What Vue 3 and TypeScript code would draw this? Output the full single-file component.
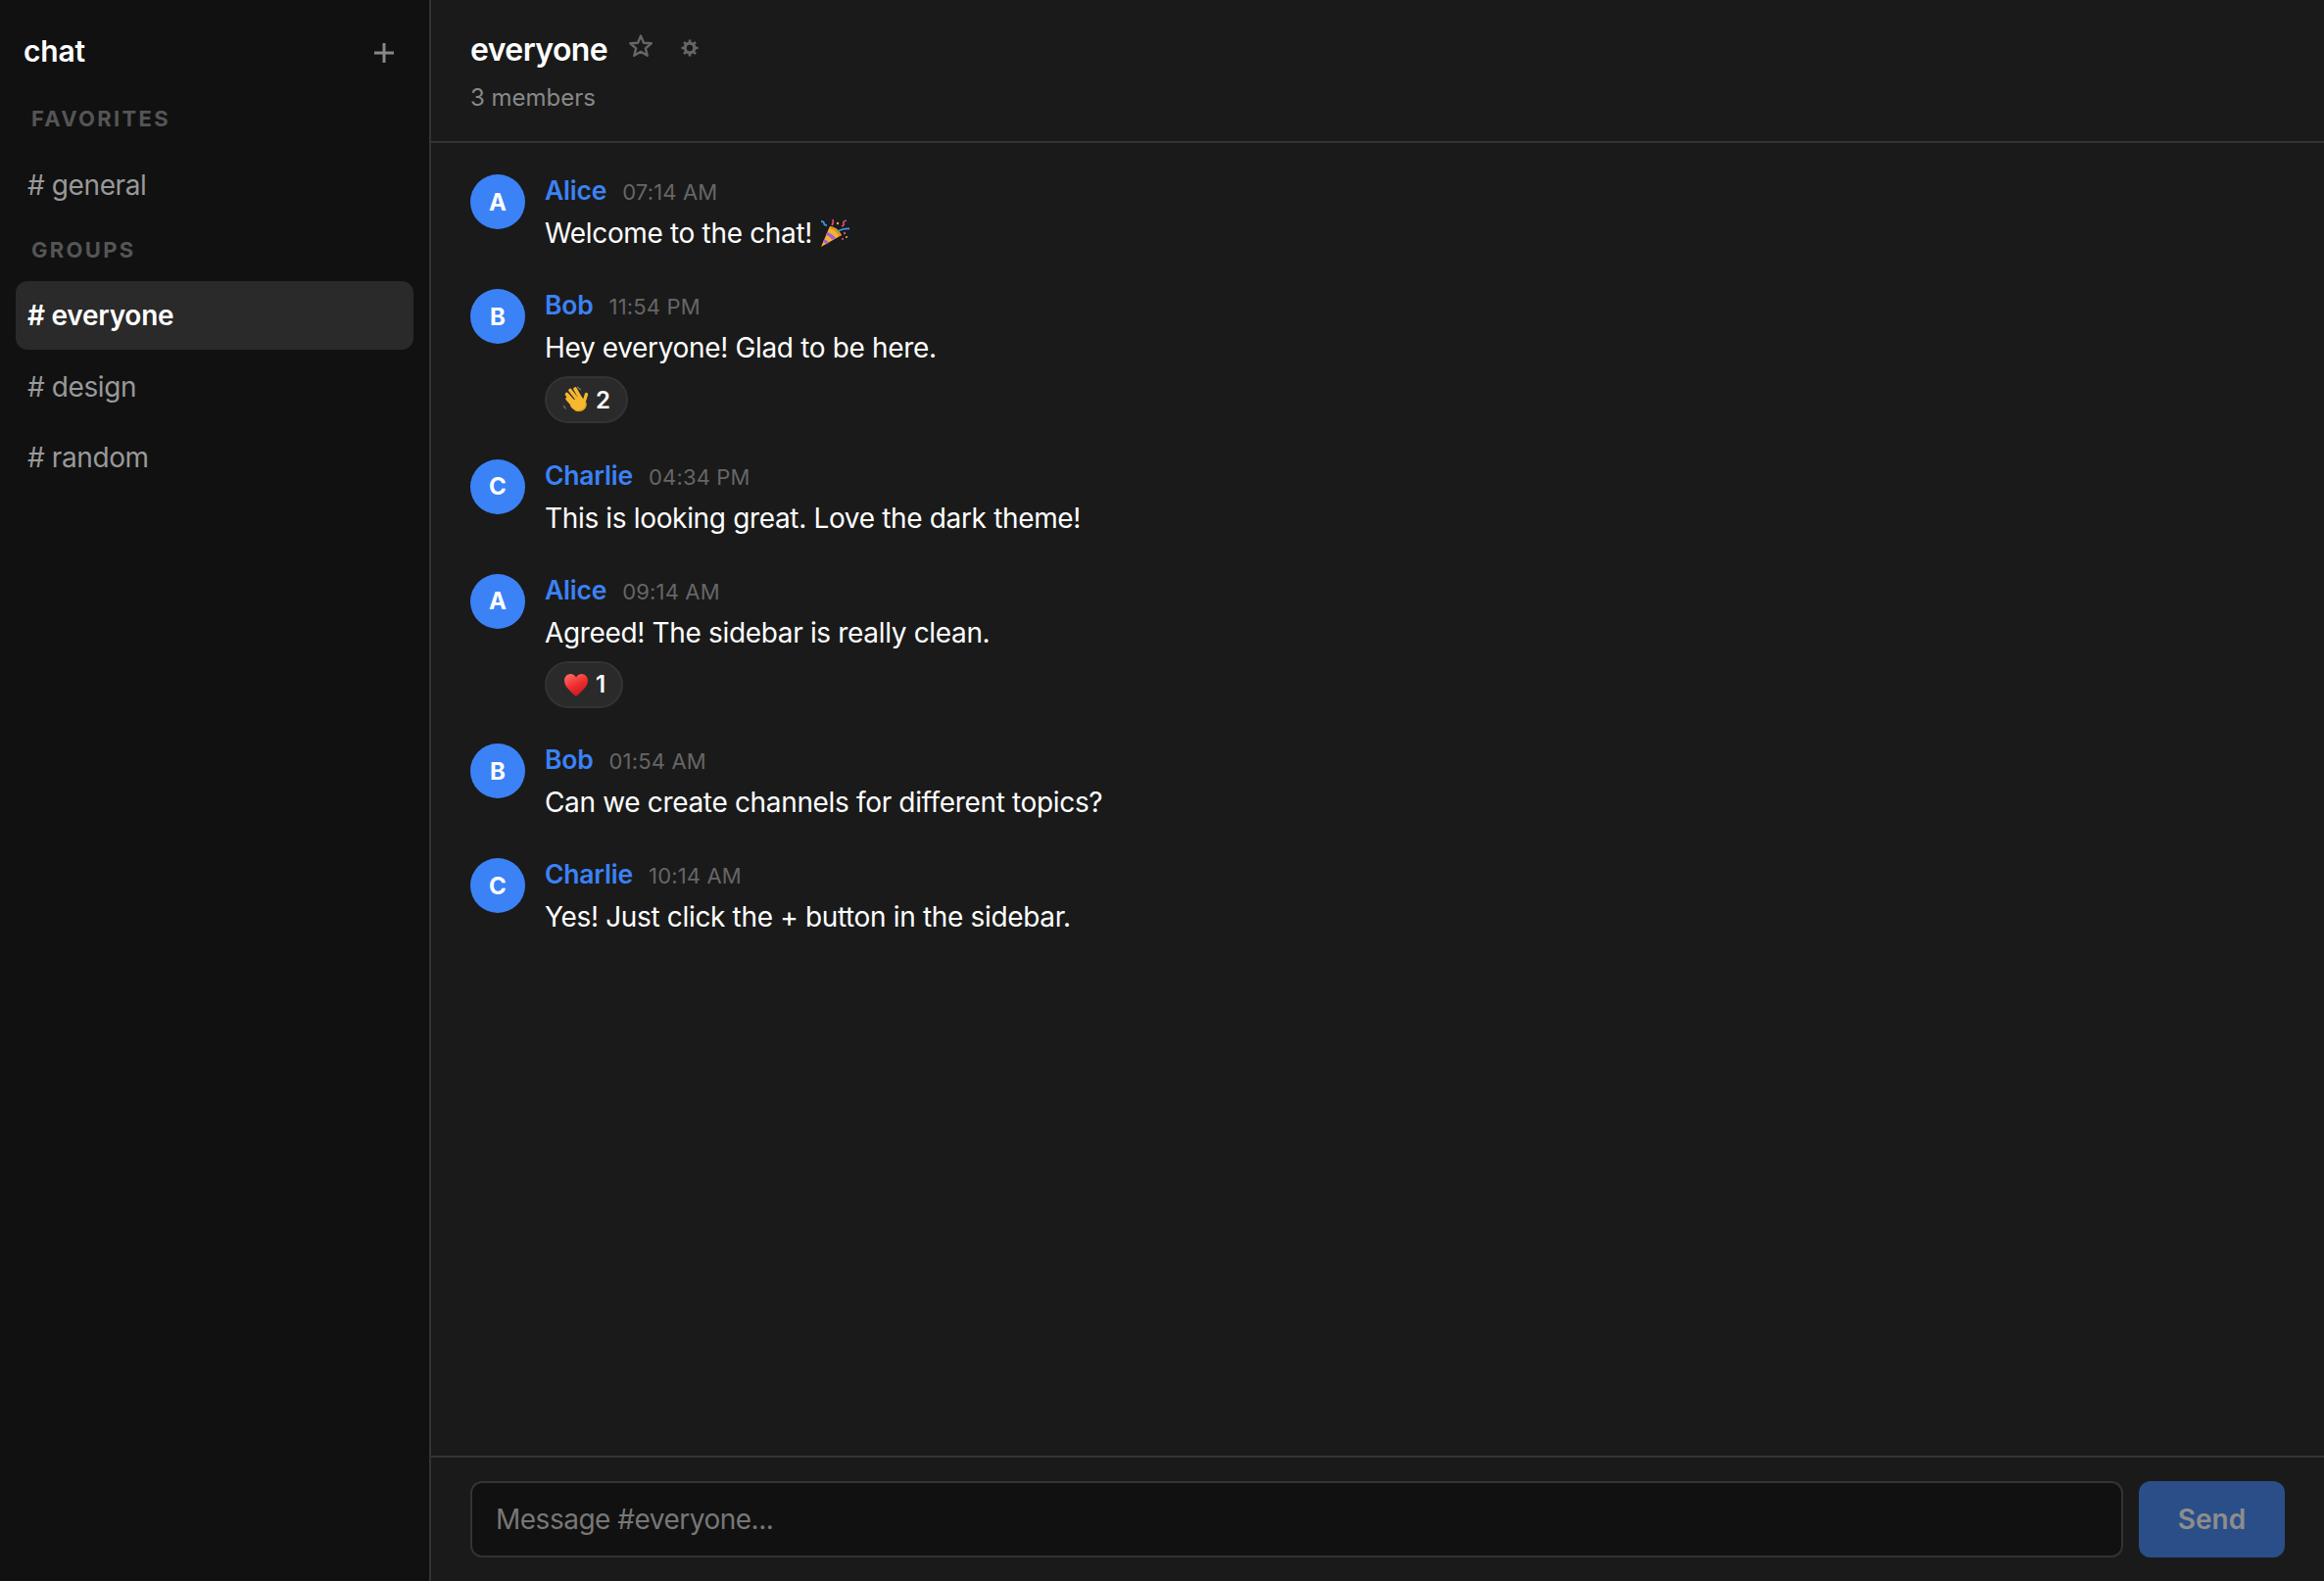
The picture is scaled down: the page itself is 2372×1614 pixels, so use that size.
<template>
  <div class="app">
    <aside class="sidebar">
      <div class="sidebar-header">
        <span class="brand">chat</span>
        <svg class="plus" width="20" height="20" viewBox="0 0 20 20">
          <path d="M10 0v20M0 10h20" stroke="#888" stroke-width="3" fill="none" />
        </svg>
      </div>
      <div class="section-label first">FAVORITES</div>
      <div class="channel"># general</div>
      <div class="section-label">GROUPS</div>
      <div class="channel-list">
        <div
          v-for="c in groups"
          :key="c"
          class="channel"
          :class="{ active: c === 'everyone' }"
        >
          # {{ c }}
        </div>
      </div>
    </aside>

    <main class="main">
      <header class="header">
        <div class="title-row">
          <h1 class="title">everyone</h1>
          <svg class="star" width="26" height="26" viewBox="0 0 26 26">
            <path
              d="M13 2.600l3 7.100 7.700.6-5.900 5 1.900 7.500L13 18.800l-6.700 4 1.900-7.500-5.900-5 7.700-.6z"
              fill="none"
              stroke="#666"
              stroke-width="2.400"
              stroke-linejoin="round"
            />
          </svg>
          <svg class="gear" width="18" height="18" viewBox="0 0 18 18">
            <circle cx="9" cy="9" r="4.800" fill="none" stroke="#666" stroke-width="3.200" />
            <path
              d="M9 .5v3M9 14.500v3M.5 9h3M14.500 9h3M3 3l2.100 2.100M12.900 12.900L15 15M3 15l2.100-2.100M12.900 5.100L15 3"
              stroke="#666"
              stroke-width="2.600"
            />
          </svg>
        </div>
        <div class="members">3 members</div>
      </header>

      <section class="messages">
        <article v-for="m in messages" :key="m.id" class="message">
          <div class="avatar">{{ m.author[0] }}</div>
          <div class="body">
            <div class="meta">
              <span class="author">{{ m.author }}</span>
              <span class="time">{{ m.time }}</span>
            </div>
            <div class="text">
              {{ m.text }}
              <svg v-if="m.party" width="30" height="30" viewBox="0 0 30 30">
                <path d="M1 29L10 8q8 1 12 9z" fill="#f2b632" />
                <path d="M7.500 14q5 1.500 8.500 6l-3.500 1.800q-3-3.800-6.800-5zM4.300 21.300q3 1 5 3.500l-3 1.400q-1.500-1.800-3.400-2.400z" fill="#a95fd0" />
                <path d="M10 8q8 1 12 9l-3 1q-3-6-8.500-7.500z" fill="#dc9426" />
                <path d="M18 13q6-3 12-2.500" stroke="#3f9be0" stroke-width="1.800" fill="none" />
                <path d="M1 3q3 0 3 2t3 2" stroke="#3f8fe0" stroke-width="1.800" fill="none" />
                <path d="M12 7q2-2 1-6M22 8q3-1 2-3t3-3" stroke="#d9487f" stroke-width="1.700" fill="none" />
                <circle cx="18" cy="5" r="1.200" fill="#e0b040" />
                <circle cx="25" cy="15" r="1.200" fill="#d9487f" />
                <circle cx="23" cy="21" r="1.100" fill="#d9487f" />
                <circle cx="27" cy="19" r="1" fill="#f2b632" />
              </svg>
            </div>
            <div v-if="m.reaction" class="reaction">
              <svg v-if="m.reaction.kind === 'wave'" width="28" height="28" viewBox="0 0 28 28">
                <path d="M1 20l2.500 3.500M15 1l4 3" stroke="#777" stroke-width="1.200" fill="none" />
                <path
                  d="M5 13l7 8M4.500 8.500l9 10M8 4.500l8.500 11M13 3l6 10.500"
                  stroke="#f5b82e"
                  stroke-width="3.600"
                  stroke-linecap="round"
                  fill="none"
                />
                <path d="M24.500 8.500l-2.500 8" stroke="#f5b82e" stroke-width="3.400" stroke-linecap="round" fill="none" />
                <path d="M11 14.500l8-4 5 6.500q1 5-2.500 7.500t-8.500 .5q-3-1.500-5-4.500z" fill="#f5b82e" />
                <path d="M13 25q5 1.500 8.500-1t2.500-7" stroke="#e0941c" stroke-width="1.200" fill="none" />
              </svg>
              <svg v-else width="28" height="28" viewBox="0 0 28 28">
                <defs>
                  <linearGradient id="heart-fill" x1="0.2" y1="0" x2="0.7" y2="1">
                    <stop offset="0" stop-color="#ff6a62" />
                    <stop offset="0.5" stop-color="#ef2f2f" />
                    <stop offset="1" stop-color="#c8141c" />
                  </linearGradient>
                </defs>
                <path
                  d="M14 26C8 20.500 2 16 2 9.800 2 5.800 5 3 8.400 3c2.500 0 4.400 1.300 5.600 3.500C15.200 4.300 17.100 3 19.600 3 23 3 26 5.800 26 9.800 26 16 20 20.500 14 26z"
                  fill="url(#heart-fill)"
                />
              </svg>
              <span class="count">{{ m.reaction.count }}</span>
            </div>
          </div>
        </article>
      </section>

      <footer class="composer">
        <input class="composer-input" type="text" placeholder="Message #everyone..." />
        <button class="send" disabled>Send</button>
      </footer>
    </main>
  </div>
</template>

<script setup lang="ts">
interface Message {
  id: number
  author: string
  time: string
  text: string
  party?: boolean
  reaction?: { kind: 'wave' | 'heart'; count: number }
}

const groups = ['everyone', 'design', 'random']

const messages: Message[] = [
  { id: 1, author: 'Alice', time: '07:14 AM', text: 'Welcome to the chat!', party: true },
  { id: 2, author: 'Bob', time: '11:54 PM', text: 'Hey everyone! Glad to be here.', reaction: { kind: 'wave', count: 2 } },
  { id: 3, author: 'Charlie', time: '04:34 PM', text: 'This is looking great. Love the dark theme!' },
  { id: 4, author: 'Alice', time: '09:14 AM', text: 'Agreed! The sidebar is really clean.', reaction: { kind: 'heart', count: 1 } },
  { id: 5, author: 'Bob', time: '01:54 AM', text: 'Can we create channels for different topics?' },
  { id: 6, author: 'Charlie', time: '10:14 AM', text: 'Yes! Just click the + button in the sidebar.' },
]
</script>

<style>
html,
body {
  margin: 0;
  background: #1a1a1a;
}
</style>

<style scoped>
.app {
  display: flex;
  height: 1614px;
  font-family: Inter, "Liberation Sans", sans-serif;
  color: #fff;
  background: #1a1a1a;
  overflow: hidden;
}

.sidebar {
  width: 440px;
  flex-shrink: 0;
  box-sizing: border-box;
  background: #111;
  border-right: 2px solid #333;
  padding: 0 16px;
}

.sidebar-header {
  display: flex;
  align-items: center;
  justify-content: space-between;
  height: 104px;
  padding: 0 20px 0 8px;
}

.plus {
  margin-top: 3px;
}

.brand {
  font-size: 30px;
  font-weight: 600;
  letter-spacing: -0.2px;
}

.section-label {
  font-size: 22px;
  font-weight: 700;
  letter-spacing: 2.300px;
  line-height: 28px;
  color: #555;
  padding: 18px 16px;
}

.section-label.first {
  padding-top: 3px;
}

.channel-list {
  display: flex;
  flex-direction: column;
  gap: 2px;
}

.channel {
  height: 70px;
  line-height: 72px;
  padding: 0 12px;
  border-radius: 12px;
  font-size: 28px;
  letter-spacing: -0.4px;
  color: #999;
}

.channel.active {
  background: #2a2a2a;
  color: #fff;
  font-weight: 600;
  line-height: 70px;
  letter-spacing: -0.25px;
}

.main {
  flex: 1;
  min-width: 0;
  display: flex;
  flex-direction: column;
}

.header {
  height: 146px;
  box-sizing: border-box;
  border-bottom: 2px solid #333;
  padding: 30px 40px 0;
}

.title-row {
  display: flex;
  align-items: center;
  height: 40px;
}

.title {
  margin: 0;
  font-size: 32px;
  font-weight: 600;
  letter-spacing: -0.6px;
}

.star {
  margin: 0 0 6px 21px;
}

.gear {
  margin: 0 0 2px 28px;
}

.members {
  margin-top: 15px;
  font-size: 24px;
  color: #888;
}

.messages {
  flex: 1;
  display: flex;
  flex-direction: column;
  gap: 36.300px;
  padding: 32px 40px;
}

.message {
  display: flex;
  gap: 20px;
}

.avatar {
  width: 56px;
  height: 56px;
  border-radius: 50%;
  flex-shrink: 0;
  background: #3b82f6;
  display: flex;
  align-items: center;
  justify-content: center;
  font-size: 24px;
  font-weight: 700;
}

.meta {
  display: flex;
  align-items: baseline;
  gap: 16px;
  height: 34px;
  line-height: 32px;
  margin-bottom: 5px;
}

.author {
  font-size: 26.500px;
  font-weight: 600;
  letter-spacing: -0.2px;
  color: #3b82f6;
}

.time {
  font-size: 22px;
  letter-spacing: 0.15px;
  color: #666;
}

.text {
  display: flex;
  align-items: center;
  gap: 8px;
  font-size: 28px;
  letter-spacing: -0.34px;
  line-height: 42px;
  color: #fff;
}

.reaction {
  display: inline-flex;
  align-items: center;
  gap: 6px;
  height: 48px;
  box-sizing: border-box;
  margin-top: 8px;
  padding: 0 16px;
  border: 2px solid #333;
  border-radius: 24px;
  background: #2a2a2a;
}

.count {
  font-size: 24px;
  font-weight: 600;
}

.composer {
  display: flex;
  gap: 16px;
  height: 128px;
  box-sizing: border-box;
  padding: 24px 40px;
  border-top: 2px solid #333;
}

.composer-input {
  flex: 1;
  min-width: 0;
  box-sizing: border-box;
  height: 78px;
  padding: 0 24px;
  background: #111;
  border: 2px solid #333;
  border-radius: 12px;
  color: #fff;
  font-family: inherit;
  font-size: 28px;
  letter-spacing: -0.5px;
  outline: none;
}

.composer-input::placeholder {
  color: #777;
}

.send {
  width: 149px;
  height: 78px;
  border: none;
  border-radius: 12px;
  background: #3b82f6;
  color: #fff;
  opacity: 0.5;
  font-family: inherit;
  font-size: 28px;
  font-weight: 600;
}
</style>
